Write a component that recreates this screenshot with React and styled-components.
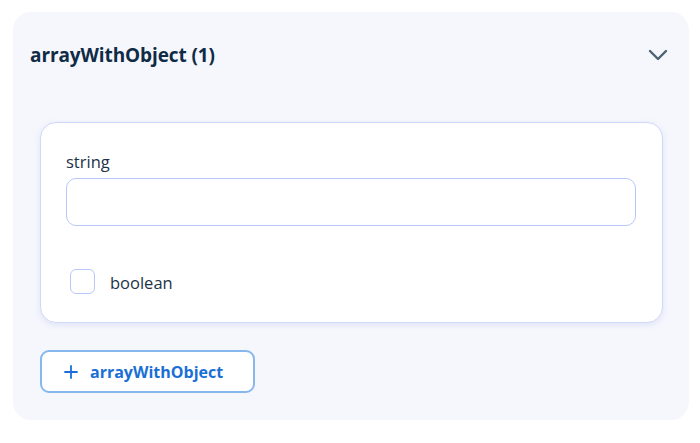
import React from 'react';
import styled, { createGlobalStyle } from 'styled-components';

const Global = createGlobalStyle`
  body {
    margin: 0;
    background: #ffffff;
    font-family: "Open Sans", "Noto Sans", sans-serif;
  }
`;

function ChevronDown() {
    return (
        <svg width="20" height="12" viewBox="0 0 20 12" fill="none">
            <path d="M2 2L10 10L18 2" stroke="#4b6272" strokeWidth="2.4" strokeLinecap="round" strokeLinejoin="round" />
        </svg>
    );
}

function Plus() {
    return (
        <svg width="14" height="14" viewBox="0 0 14 14" fill="none">
            <path d="M7 1V13M1 7H13" stroke="#1a6fd6" strokeWidth="1.8" strokeLinecap="round" />
        </svg>
    );
}

export default function App() {
    return (
        <>
            <Global />
            <Page>
                <Panel>
                    <Header>
                        <Title>arrayWithObject (1)</Title>
                        <Toggle>
                            <ChevronDown />
                        </Toggle>
                    </Header>
                    <Body>
                        <Card>
                            <Label>string</Label>
                            <Input type="text" />
                            <CheckRow>
                                <Box />
                                <CheckLabel>boolean</CheckLabel>
                            </CheckRow>
                        </Card>
                        <AddButton>
                            <Plus />
                            <span>arrayWithObject</span>
                        </AddButton>
                    </Body>
                </Panel>
            </Page>
        </>
    );
}

const Page = styled.div`
    padding: 12px 11px 0 13px;
`;

const Panel = styled.div`
    width: 676px;
    height: 408px;
    box-sizing: border-box;
    background: #f6f7fd;
    border-radius: 18px;
`;

const Header = styled.div`
    height: 86px;
    display: flex;
    align-items: center;
    justify-content: space-between;
    padding: 0 21px 0 17px;
`;

const Title = styled.h2`
    margin: 0;
    font-size: 19px;
    font-weight: 700;
    color: #0f2b46;
    letter-spacing: -0.1px;
`;

const Toggle = styled.span`
    display: flex;
    align-items: center;
`;

const Body = styled.div`
    padding: 24px 26px 0 27px;
`;

const Card = styled.div`
    background: #ffffff;
    border: 1px solid #d0d9f8;
    border-radius: 16px;
    box-shadow: 0 2px 6px rgba(120, 140, 210, 0.18);
    padding: 28px 26px 29px 25px;
    height: 201px;
    box-sizing: border-box;
`;

const Label = styled.div`
    font-size: 16.5px;
    line-height: 22px;
    color: #1c3348;
    margin-bottom: 5px;
`;

const Input = styled.input`
    display: block;
    width: 100%;
    height: 48px;
    box-sizing: border-box;
    border: 1.5px solid #b8c8fa;
    border-radius: 10px;
    background: #ffffff;
    outline: none;
`;

const CheckRow = styled.div`
    display: flex;
    align-items: center;
    gap: 15px;
    margin-top: 42px;
    padding-left: 4px;
`;

const Box = styled.span`
    width: 25px;
    height: 25px;
    box-sizing: border-box;
    border: 1.5px solid #b8c8fa;
    border-radius: 6px;
    background: #ffffff;
`;

const CheckLabel = styled.span`
    font-size: 16.5px;
    line-height: 25px;
    padding-top: 2px;
    color: #1c3348;
`;

const AddButton = styled.button`
    margin-top: 27px;
    width: 215px;
    height: 43px;
    display: flex;
    align-items: center;
    gap: 12px;
    padding: 0 0 0 22px;
    box-sizing: border-box;
    background: #ffffff;
    border: 2px solid #86b8ee;
    border-radius: 9px;
    font-family: "Open Sans", "Noto Sans", sans-serif;
    font-size: 16px;
    font-weight: 700;
    color: #1a6fd6;
    cursor: pointer;
`;
